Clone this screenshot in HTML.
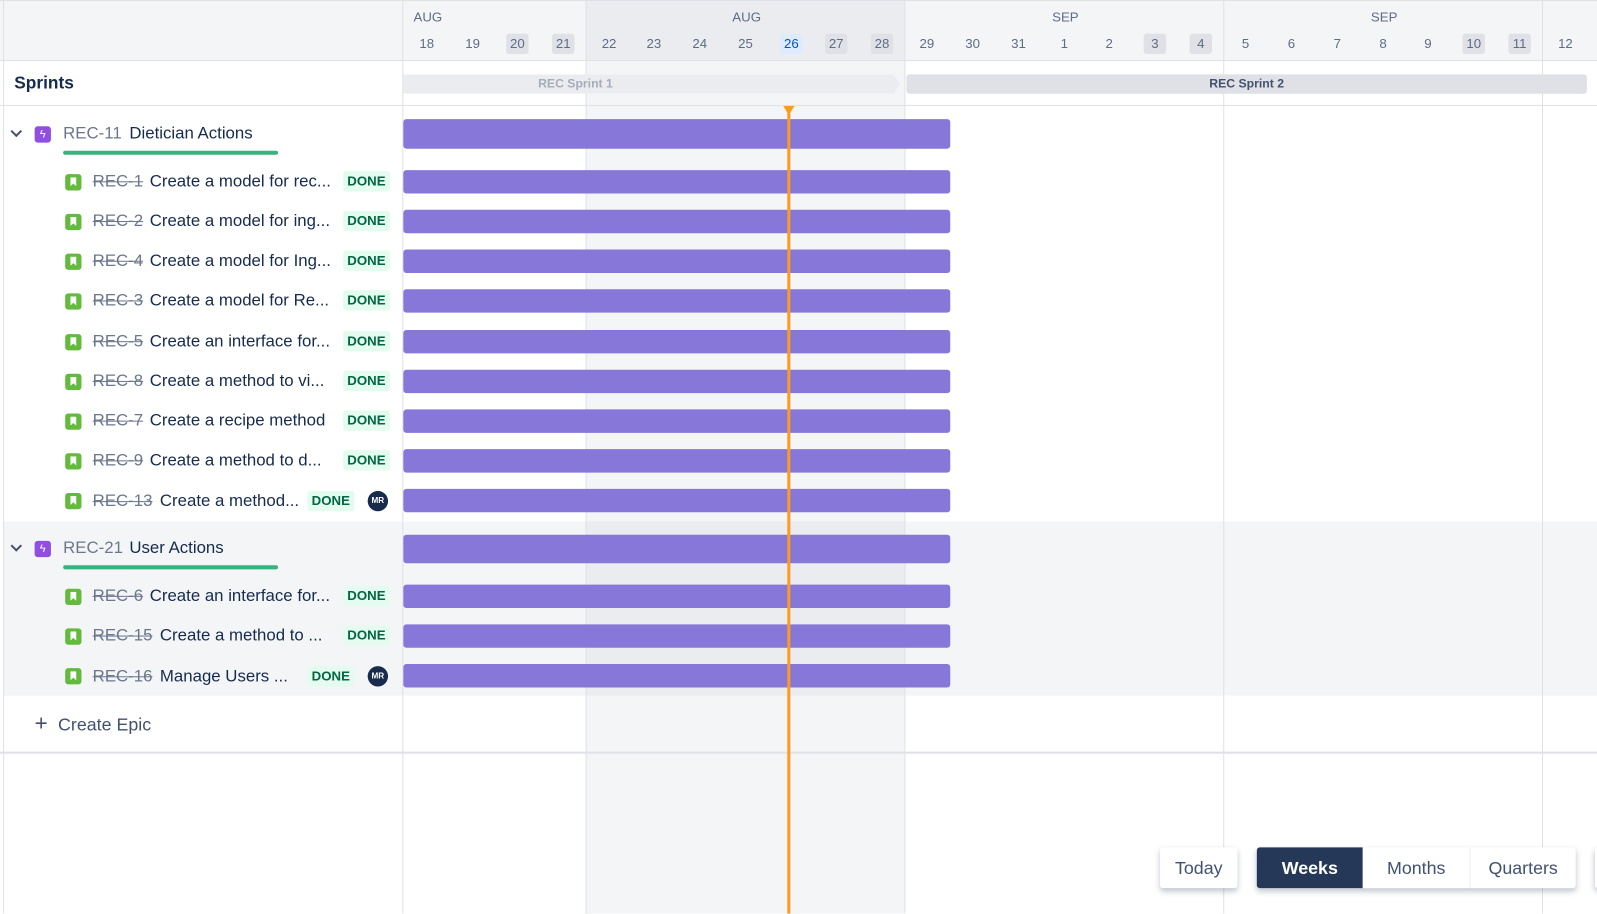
<!DOCTYPE html>
<html><head><meta charset="utf-8"><style>
*{margin:0;padding:0;box-sizing:border-box}
body{width:1597px;height:897px;position:relative;overflow:hidden;background:#fff;font-family:"Liberation Sans",sans-serif;color:#172b4d}
#w{position:absolute;left:0;top:0;width:1568px;height:881px;transform:scale(1.0185);transform-origin:0 0}
.a{position:absolute}
.vl{position:absolute;top:0;width:1px;height:897px;background:#dfe1e6}
.hl{position:absolute;left:0;height:1px;width:1597px;background:#dfe1e6}
.day{position:absolute;top:33px;width:22px;height:20px;margin-left:-11px;text-align:center;font-size:13px;line-height:20px;color:#5e6c84;border-radius:3px}
.g{background:#dfe1e6}
.mon{position:absolute;top:9px;font-size:13px;color:#5e6c84}
.bar{position:absolute;left:396px;width:537px;background:#8777d9;border-radius:3px}
.ico{position:absolute;left:64px;width:16px;height:16px;background:#63ba3c;border-radius:3px}
.ico:after{content:"";position:absolute;left:5px;top:3px;width:6px;height:9px;background:#fff;clip-path:polygon(0 0,100% 0,100% 100%,50% 70%,0 100%)}
.key{position:absolute;font-size:16.5px;color:#6b778c;text-decoration:line-through;white-space:nowrap}
.tt{position:absolute;font-size:16.5px;color:#172b4d;white-space:nowrap;overflow:hidden}
.done{position:absolute;height:20px;padding:0 4px;background:#e3fcef;color:#006644;font-weight:bold;font-size:13px;line-height:20px;border-radius:3px}
.av{position:absolute;left:361px;width:20px;height:20px;border-radius:50%;background:#172b4d;color:#fff;font-size:8px;font-weight:bold;line-height:20px;text-align:center}
.epic{position:absolute;left:34px;width:16px;height:16px;background:#904ee2;border-radius:3px;color:#fff;font-size:11px;line-height:16px;text-align:center}
.chev{position:absolute;left:12px;width:8px;height:8px;border-right:2px solid #42526e;border-bottom:2px solid #42526e;transform:rotate(45deg)}
.btn{position:absolute;top:832px;height:40px;font-size:17.5px;line-height:40px;text-align:center;color:#42526e;background:#fff}
</style></head><body><div id="w">
<div class="a" style="left:0;top:0;width:1597px;height:60px;background:#f4f5f7"></div>
<div class="a" style="left:575px;top:0;width:313px;height:60px;background:#ebecf0"></div>
<div class="a" style="left:575px;top:60px;width:313px;height:837px;background:#f4f5f7"></div>
<div class="a" style="left:4px;top:512px;width:1593px;height:171px;background:#f4f5f7"></div>
<div class="a" style="left:575px;top:512px;width:313px;height:171px;background:#ebecf0"></div>
<div class="vl" style="left:3px"></div>
<div class="vl" style="left:395px"></div>
<div class="vl" style="left:575px"></div>
<div class="vl" style="left:888px"></div>
<div class="vl" style="left:1201px"></div>
<div class="vl" style="left:1514px"></div>
<div class="hl" style="top:0"></div>
<div class="hl" style="top:59px"></div>
<div class="hl" style="top:103px"></div>
<div class="hl" style="top:738px;height:2px"></div>
<div class="mon" style="left:406px">AUG</div>
<div class="mon" style="left:719px">AUG</div>
<div class="mon" style="left:1033px">SEP</div>
<div class="mon" style="left:1346px">SEP</div>
<div class="day" style="left:419px">18</div><div class="day" style="left:464px">19</div><div class="day g" style="left:508px">20</div><div class="day g" style="left:553px">21</div>
<div class="day" style="left:598px">22</div><div class="day" style="left:642px">23</div><div class="day" style="left:687px">24</div><div class="day" style="left:732px">25</div>
<div class="day" style="left:777px;background:#deebff;color:#0052cc">26</div><div class="day g" style="left:821px">27</div><div class="day g" style="left:866px">28</div>
<div class="day" style="left:910px">29</div><div class="day" style="left:955px">30</div><div class="day" style="left:1000px">31</div><div class="day" style="left:1045px">1</div><div class="day" style="left:1089px">2</div><div class="day g" style="left:1134px">3</div><div class="day g" style="left:1179px">4</div>
<div class="day" style="left:1223px">5</div><div class="day" style="left:1268px">6</div><div class="day" style="left:1313px">7</div><div class="day" style="left:1358px">8</div><div class="day" style="left:1402px">9</div><div class="day g" style="left:1447px">10</div><div class="day g" style="left:1492px">11</div><div class="day" style="left:1537px">12</div>
<div class="a" style="left:14px;top:72px;font-size:17px;font-weight:bold;color:#172b4d">Sprints</div>
<div class="a" style="left:396px;top:73px;width:488px;height:19px;background:#ebecf0;clip-path:polygon(0 0,481px 0,100% 50%,481px 100%,0 100%);font-size:12px;font-weight:bold;color:#a5adba;text-align:center;line-height:19px;padding-right:150px">REC Sprint 1</div>
<div class="a" style="left:890px;top:73px;width:668px;height:19px;background:#dfe1e6;border-radius:3px;font-size:12px;font-weight:bold;color:#42526e;text-align:center;line-height:19px">REC Sprint 2</div>
<div class="chev" style="top:125px"></div>
<div class="epic" style="top:124px">ϟ</div>
<div class="a" style="left:62px;top:122px;font-size:16.5px;color:#6b778c">REC-11</div>
<div class="a" style="left:127px;top:122px;font-size:16.5px">Dietician Actions</div>
<div class="a" style="left:62px;top:148px;width:211px;height:4px;border-radius:2px;background:#36b37e"></div>
<div class="bar" style="top:117px;height:29px"></div>
<div class="chev" style="top:532px"></div>
<div class="epic" style="top:531px">ϟ</div>
<div class="a" style="left:62px;top:529px;font-size:16.5px;color:#6b778c">REC-21</div>
<div class="a" style="left:127px;top:529px;font-size:16.5px">User Actions</div>
<div class="a" style="left:62px;top:555px;width:211px;height:4px;border-radius:2px;background:#36b37e"></div>
<div class="bar" style="top:525px;height:28px"></div>

<div class="ico" style="top:171px"></div><div class="key" style="left:91px;top:169px">REC-1</div><div class="tt" style="left:147px;top:169px;width:184px">Create a model for rec...</div><div class="done" style="left:337px;top:168px">DONE</div><div class="bar" style="top:167px;height:23px"></div>
<div class="ico" style="top:210px"></div><div class="key" style="left:91px;top:208px">REC-2</div><div class="tt" style="left:147px;top:208px;width:184px">Create a model for ing...</div><div class="done" style="left:337px;top:207px">DONE</div><div class="bar" style="top:206px;height:23px"></div>
<div class="ico" style="top:249px"></div><div class="key" style="left:91px;top:247px">REC-4</div><div class="tt" style="left:147px;top:247px;width:184px">Create a model for Ing...</div><div class="done" style="left:337px;top:246px">DONE</div><div class="bar" style="top:245px;height:23px"></div>
<div class="ico" style="top:288px"></div><div class="key" style="left:91px;top:286px">REC-3</div><div class="tt" style="left:147px;top:286px;width:184px">Create a model for Re...</div><div class="done" style="left:337px;top:285px">DONE</div><div class="bar" style="top:284px;height:23px"></div>
<div class="ico" style="top:328px"></div><div class="key" style="left:91px;top:326px">REC-5</div><div class="tt" style="left:147px;top:326px;width:184px">Create an interface for...</div><div class="done" style="left:337px;top:325px">DONE</div><div class="bar" style="top:324px;height:23px"></div>
<div class="ico" style="top:367px"></div><div class="key" style="left:91px;top:365px">REC-8</div><div class="tt" style="left:147px;top:365px;width:184px">Create a method to vi...</div><div class="done" style="left:337px;top:364px">DONE</div><div class="bar" style="top:363px;height:23px"></div>
<div class="ico" style="top:406px"></div><div class="key" style="left:91px;top:404px">REC-7</div><div class="tt" style="left:147px;top:404px;width:184px">Create a recipe method</div><div class="done" style="left:337px;top:403px">DONE</div><div class="bar" style="top:402px;height:23px"></div>
<div class="ico" style="top:445px"></div><div class="key" style="left:91px;top:443px">REC-9</div><div class="tt" style="left:147px;top:443px;width:184px">Create a method to d...</div><div class="done" style="left:337px;top:442px">DONE</div><div class="bar" style="top:441px;height:23px"></div>
<div class="ico" style="top:484px"></div><div class="key" style="left:91px;top:483px">REC-13</div><div class="tt" style="left:157px;top:483px;width:142px">Create a method...</div><div class="done" style="left:302px;top:482px">DONE</div><div class="av" style="top:482px">MR</div><div class="bar" style="top:480px;height:23px"></div>
<div class="ico" style="top:578px"></div><div class="key" style="left:91px;top:576px">REC-6</div><div class="tt" style="left:147px;top:576px;width:184px">Create an interface for...</div><div class="done" style="left:337px;top:575px">DONE</div><div class="bar" style="top:574px;height:23px"></div>
<div class="ico" style="top:617px"></div><div class="key" style="left:91px;top:615px">REC-15</div><div class="tt" style="left:157px;top:615px;width:172px">Create a method to ...</div><div class="done" style="left:337px;top:614px">DONE</div><div class="bar" style="top:613px;height:23px"></div>
<div class="ico" style="top:656px"></div><div class="key" style="left:91px;top:655px">REC-16</div><div class="tt" style="left:157px;top:655px;width:142px">Manage Users ...</div><div class="done" style="left:302px;top:654px">DONE</div><div class="av" style="top:654px">MR</div><div class="bar" style="top:652px;height:23px"></div>

<div class="a" style="left:34px;top:699px;font-size:22px;color:#42526e;line-height:22px">+</div>
<div class="a" style="left:57px;top:701px;font-size:17.5px;color:#42526e">Create Epic</div>

<div class="a" style="left:773px;top:104px;width:3px;height:793px;background:#ff991f"></div>
<div class="a" style="left:769px;top:104px;width:11px;height:9px;background:#ff991f;clip-path:polygon(0 0,100% 0,50% 100%)"></div>

<div class="btn" style="left:1139px;width:76px;border-radius:3px;box-shadow:0 3px 6px rgba(9,30,66,.25)">Today</div>
<div class="a" style="left:1234px;top:832px;width:313px;height:40px;border-radius:3px;box-shadow:0 3px 6px rgba(9,30,66,.25);background:#fff"></div>
<div class="btn" style="left:1234px;width:104px;background:#253858;color:#fff;font-weight:bold;border-radius:3px 0 0 3px">Weeks</div>
<div class="btn" style="left:1338px;width:105px">Months</div>
<div class="a" style="left:1443px;top:832px;width:1px;height:40px;background:#ebecf0"></div>
<div class="btn" style="left:1444px;width:103px;border-radius:0 3px 3px 0">Quarters</div>
<div class="a" style="left:1566px;top:832px;width:31px;height:40px;border-radius:3px;box-shadow:0 3px 6px rgba(9,30,66,.25);background:#fff"></div>
</div></body></html>
